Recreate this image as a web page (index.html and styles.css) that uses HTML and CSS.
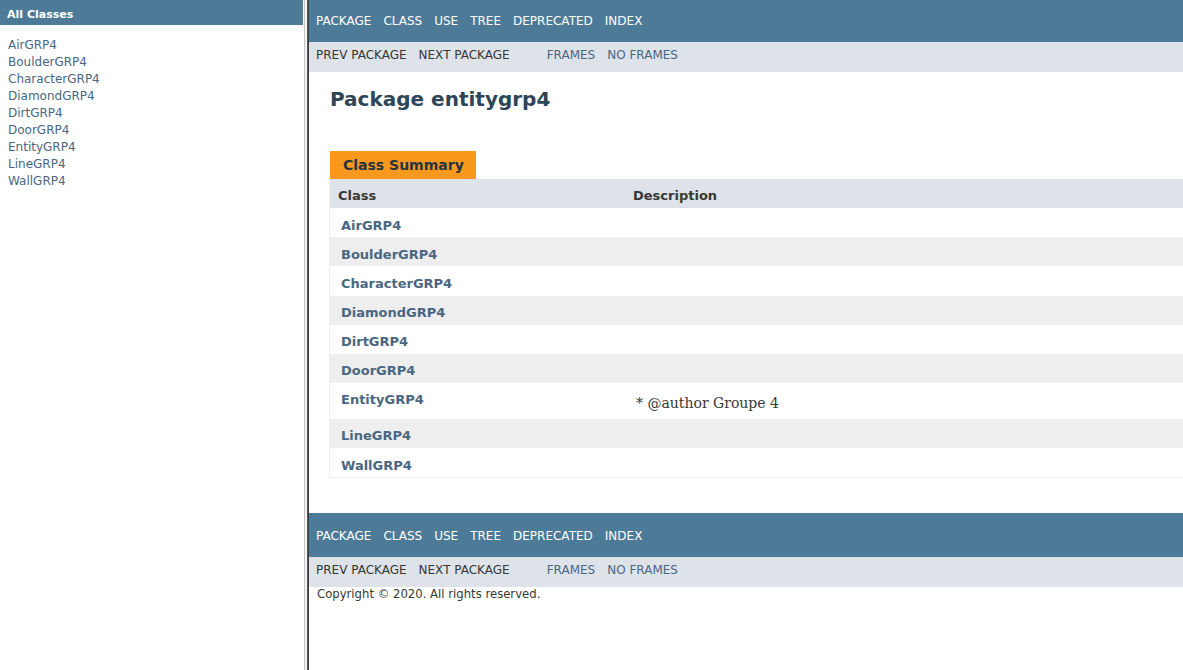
FILE: index.html
```html
<!DOCTYPE html>
<html lang="fr">
<head>
<meta charset="utf-8">
<title>entitygrp4</title>
<link rel="stylesheet" href="styles.css">
</head>
<body>
<div class="frameset">
  <aside class="side">
    <h1 class="bar">All Classes</h1>
    <div class="indexContainer">
      <ul>
        <li><a href="#">AirGRP4</a></li>
        <li><a href="#">BoulderGRP4</a></li>
        <li><a href="#">CharacterGRP4</a></li>
        <li><a href="#">DiamondGRP4</a></li>
        <li><a href="#">DirtGRP4</a></li>
        <li><a href="#">DoorGRP4</a></li>
        <li><a href="#">EntityGRP4</a></li>
        <li><a href="#">LineGRP4</a></li>
        <li><a href="#">WallGRP4</a></li>
      </ul>
    </div>
  </aside>
  <div class="divider"></div>
  <main class="main">
    <div class="page">
      <nav class="topNav">
        <ul class="navList">
          <li>Package</li>
          <li>Class</li>
          <li>Use</li>
          <li><a href="#">Tree</a></li>
          <li><a href="#">Deprecated</a></li>
          <li><a href="#">Index</a></li>
        </ul>
      </nav>
      <div class="subNav">
        <ul class="subNavList">
          <li>Prev Package</li>
          <li>Next Package</li>
        </ul>
        <ul class="subNavList">
          <li><a href="#">Frames</a></li>
          <li><a href="#">No Frames</a></li>
        </ul>
      </div>
      <div class="header">
        <h1 class="title">Package entitygrp4</h1>
      </div>
      <div class="contentContainer">
        <table class="typeSummary">
          <caption><span>Class Summary</span></caption>
          <colgroup><col class="c1"><col></colgroup>
          <thead>
            <tr><th class="colFirst">Class</th><th class="colLast">Description</th></tr>
          </thead>
          <tbody>
            <tr class="altColor"><td class="colFirst"><a href="#">AirGRP4</a></td><td class="colLast">&nbsp;</td></tr>
            <tr class="rowColor"><td class="colFirst"><a href="#">BoulderGRP4</a></td><td class="colLast">&nbsp;</td></tr>
            <tr class="altColor"><td class="colFirst"><a href="#">CharacterGRP4</a></td><td class="colLast">&nbsp;</td></tr>
            <tr class="rowColor"><td class="colFirst"><a href="#">DiamondGRP4</a></td><td class="colLast">&nbsp;</td></tr>
            <tr class="altColor"><td class="colFirst"><a href="#">DirtGRP4</a></td><td class="colLast">&nbsp;</td></tr>
            <tr class="rowColor"><td class="colFirst"><a href="#">DoorGRP4</a></td><td class="colLast">&nbsp;</td></tr>
            <tr class="altColor"><td class="colFirst"><a href="#">EntityGRP4</a></td><td class="colLast"><div class="block">* @author Groupe 4</div></td></tr>
            <tr class="rowColor"><td class="colFirst"><a href="#">LineGRP4</a></td><td class="colLast">&nbsp;</td></tr>
            <tr class="altColor"><td class="colFirst"><a href="#">WallGRP4</a></td><td class="colLast">&nbsp;</td></tr>
          </tbody>
        </table>
      </div>
      <nav class="topNav bottomNav">
        <ul class="navList">
          <li>Package</li>
          <li>Class</li>
          <li>Use</li>
          <li><a href="#">Tree</a></li>
          <li><a href="#">Deprecated</a></li>
          <li><a href="#">Index</a></li>
        </ul>
      </nav>
      <div class="subNav">
        <ul class="subNavList">
          <li>Prev Package</li>
          <li>Next Package</li>
        </ul>
        <ul class="subNavList">
          <li><a href="#">Frames</a></li>
          <li><a href="#">No Frames</a></li>
        </ul>
      </div>
      <p class="legalCopy">Copyright © 2020. All rights reserved.</p>
    </div>
  </main>
</div>
</body>
</html>
```
FILE: styles.css
```css
html, body {
  margin: 0;
  padding: 0;
  height: 100%;
}
body {
  background: #ffffff;
  color: #353833;
  font-family: "DejaVu Sans", "Liberation Sans", Arial, sans-serif;
  font-size: 14px;
  overflow: hidden;
}
a {
  color: #4A6782;
  text-decoration: none;
}
.frameset {
  display: flex;
  height: 670px;
}
.side {
  width: 303px;
  flex: none;
  overflow: hidden;
}
.bar {
  margin: 0;
  background: #4D7A97;
  color: #ffffff;
  font-size: 11px;
  font-weight: bold;
  line-height: 13px;
  padding: 8px 5px 4px 7px;
}
.indexContainer {
  margin: 11px 8px 10px 8px;
  font-size: 12px;
}
.indexContainer ul {
  margin: 0;
  padding: 0;
  list-style: none;
}
.indexContainer li {
  padding-top: 2px;
  line-height: 15px;
}
.divider {
  width: 6px;
  flex: none;
  background: linear-gradient(to right, #ffffff 0 1px, #c4c4c4 1px 2px, #f4f4f4 2px 4px, #555555 4px 5px, #3c3c3c 5px 6px);
}
.main {
  flex: 1;
  overflow: hidden;
}
.page {
  width: 914px;
}
.topNav {
  background: #4D7A97;
  color: #ffffff;
  font-size: 12px;
  height: 33px;
  padding-top: 9px;
  display: flex;
}
.bottomNav {
  margin-top: 15px;
  height: 33px;
  padding-top: 11px;
}
.topNav a {
  color: #ffffff;
}
.navList, .subNavList {
  margin: 0 25px 0 0;
  padding: 0;
  list-style: none;
  display: flex;
}
.navList:first-child, .subNavList:first-child {
  margin-left: 1px;
}
.navList li, .subNavList li {
  padding: 5px 6px;
  line-height: 14px;
  text-transform: uppercase;
}
.subNavList li {
  padding-top: 6px;
  padding-bottom: 4px;
}
.subNav {
  background: #dee3e9;
  font-size: 12px;
  height: 30px;
  display: flex;
}
.header {
  margin: 0 20px 0 21px;
  padding-top: 5px;
}
.title {
  color: #2c4557;
  font-size: 20px;
  line-height: 24px;
  margin: 10px 0;
}
.contentContainer {
  padding: 20px 20px 20px 20px;
}
.typeSummary {
  width: 100%;
  table-layout: fixed;
  border-spacing: 0;
  border-left: 1px solid #EEE;
  border-right: 1px solid #EEE;
  border-bottom: 1px solid #EEE;
}
.typeSummary caption {
  text-align: left;
  padding: 10px 0 0 1px;
  color: #253441;
  font-weight: bold;
}
.typeSummary caption span {
  display: inline-block;
  background: #F8981D;
  height: 16px;
  line-height: 16px;
  padding: 6px 12px 6px 13px;
  vertical-align: top;
}
.c1 {
  width: 295px;
}
.typeSummary th {
  background: #dee3e9;
  text-align: left;
  font-size: 13px;
  line-height: 18.15px;
  padding: 8px 3px 3px 8px;
  white-space: nowrap;
}
.typeSummary td {
  text-align: left;
  vertical-align: top;
  font-size: 13px;
  line-height: 18.15px;
  padding: 8.4px 0 2.6px 11px;
}
.typeSummary td.colLast {
  padding-left: 8px;
}
.typeSummary td.colFirst a {
  font-weight: bold;
}
.altColor {
  background: #FFFFFF;
}
.rowColor {
  background: #EEEEEF;
}
.block {
  margin: 2px 10px 3px 3px;
  font-family: "DejaVu Serif", "Liberation Serif", Georgia, serif;
  font-size: 14px;
  line-height: 20px;
}
.legalCopy {
  margin: 0 0 0 8px;
  font-size: 11.67px;
  line-height: 14px;
}
```
